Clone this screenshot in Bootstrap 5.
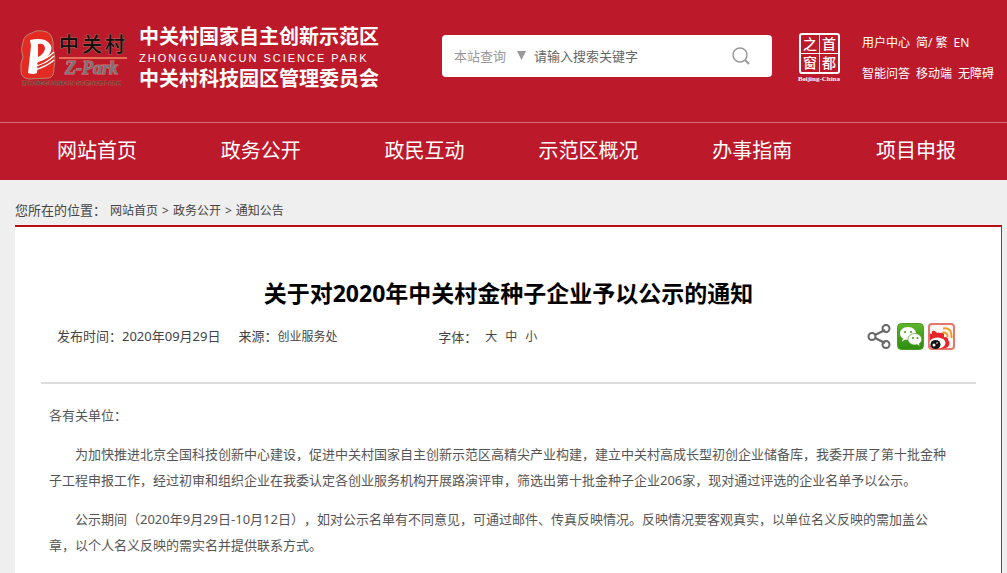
<!DOCTYPE html>
<html lang="zh-CN">
<head>
<meta charset="utf-8">
<meta name="viewport" content="width=device-width, initial-scale=1">
<title>关于对2020年中关村金种子企业予以公示的通知</title>
<link href="https://cdn.jsdelivr.net/npm/bootstrap@5.3.0/dist/css/bootstrap.min.css" rel="stylesheet">
<style>
  body { background: #efefef; color: #444; font-family: "Noto Sans", "Noto Sans CJK SC", sans-serif; font-size: 13px; line-height: 26px; }
  a { color: inherit; text-decoration: none; }
  .site-header { background: #bc1a2b; color: #fff; }
  .masthead { min-height: 122px; padding: 0 11px 11px 20px; }
  .site-logo { width: 108px; height: 64px; margin-top: 6px; }
  .brand, .quick-links { padding-top: 4px; }
  .site-name { margin-left: 11px; font-size: 20px; line-height: 24px; font-weight: 700; white-space: nowrap; }
  .site-name-en { font-family: "Liberation Sans", sans-serif; font-size: 11px; line-height: 18px; font-weight: 400; letter-spacing: 2px; }
  .search-box { flex: 0 1 330px; height: 42px; border-radius: 4px; padding: 0 22px 0 12px; }
  .search-box select { width: 72px; border: 0; color: #999; appearance: none; padding: 0; background: url("data:image/svg+xml,%3Csvg xmlns='http://www.w3.org/2000/svg' viewBox='0 0 9 9'%3E%3Cpath fill='%23999' d='M0 0h9L4.500 9z'/%3E%3C/svg%3E") right center / 9px 9px no-repeat; }
  .search-box input { border: 0; padding: 0; margin-left: 8px; min-width: 0; background: none; outline: 0; }
  .search-box input::placeholder { color: #666; opacity: 1; }
  .seal { width: 48px; height: 52px; margin: 2px 0 0 24px; }
  .quick-links { min-width: 134px; margin-left: 18px; font-size: 12px; line-height: 31px; white-space: nowrap; }
  .quick-links > div { display: flex; gap: 6px; }
  .main-nav { border-top: 1px solid #d5707b; padding: 0 9px 2px 15px; font-size: 20px; line-height: 55px; }
  .crumbs { padding: 17px 15px 1px; }
  .crumbs ol { font-size: 12px; }
  .crumbs li + li::before { content: ">"; padding: 0 4px; }
  .sheet { margin: 0 5px 0 15px; border-top: 2px solid #b80c14; border-right: 1px solid #c81f2b; padding: 49px 25px 14px 26px; }
  .sheet h1 { font-size: 23px; line-height: 34px; font-weight: 700; color: #000; margin: 0 0 13px; }
  .meta-row { padding: 0 21px 32px 16px; border-bottom: 2px solid #ddd; }
  .meta-left { flex: 0 0 42%; gap: 18px; }
  .meta-row .minor { font-size: 12px; }
  .size-btn { border: 0; background: none; padding: 0; color: inherit; font-size: 12px; }
  .share-btn { border: 0; background: none; padding: 0; width: 27px; height: 27px; display: block; }
  .share-btn svg { display: block; }
  .notice { padding: 18px 27px 0 8px; color: #555; text-spacing-trim: space-all; }
  .notice p { margin: 0 0 13px; }
  .notice .indent { text-indent: 2em; }
</style>
</head>
<body class="d-flex flex-column min-vh-100">
<header class="site-header">
  <div class="masthead d-flex align-items-center">
    <a href="#" class="brand d-flex align-items-center" aria-label="中关村国家自主创新示范区">
      <svg class="site-logo flex-shrink-0" viewBox="0 0 108 64">
        <path d="M3 13Q4 6 12 4Q17 0 27 3Q34 6 33 20Q36 28 34 39Q34 48 29 49L9 50Q1 49 1 42Q0 34 3 28Q0 20 3 13Z" fill="#e32b24" stroke="#b98a6a" stroke-width="1"/>
        <path d="M10 11Q18 9 25 11Q33 15 31 22Q28 30 18 33L17 44Q13 46 8 44L11 17Z" fill="#fff"/>
        <path d="M18 15Q25 14 25 20Q23 26 18 28Z" fill="#e32b24"/>
        <path d="M10 34Q25 32 34 23M12 38Q25 36 34 27M14 41Q26 38 34 31" fill="none" stroke="#fff" stroke-width="1.500"/>
        <path d="M17 35Q27 32 34 25M17 38Q27 35 34 29" fill="none" stroke="#e32b24" stroke-width="1"/>
        <g font-family="Noto Sans CJK SC, sans-serif" font-size="20" font-weight="500" fill="#17100f" stroke="#a66b5c" stroke-width="1" paint-order="stroke">
          <text x="39" y="23">中</text><text x="62" y="23">关</text><text x="85" y="23">村</text>
        </g>
        <path d="M39 29H107" stroke="#e56f57" stroke-width="2"/>
        <text x="45" y="45" font-family="Liberation Serif, serif" font-style="italic" font-weight="700" font-size="18" fill="#78737b" stroke="#d58178" stroke-width="1" paint-order="stroke">Z-Park</text>
        <text x="2" y="56" font-family="Liberation Sans, sans-serif" font-size="6" font-weight="700" fill="#64302c" stroke="#c8796a" stroke-width="0.500" paint-order="stroke">ZHONGGUANCUN SCIENCE PARK</text>
      </svg>
      <span class="site-name d-block">
        <span class="d-block">中关村国家自主创新示范区</span>
        <span class="site-name-en d-block">ZHONGGUANCUN SCIENCE PARK</span>
        <span class="d-block">中关村科技园区管理委员会</span>
      </span>
    </a>
    <form class="search-box bg-white d-flex align-items-center ms-auto" role="search">
      <select aria-label="查询范围"><option>本站查询</option></select>
      <input class="flex-grow-1" type="text" aria-label="搜索关键字" placeholder="请输入搜索关键字">
      <button type="button" class="border-0 bg-transparent p-0 d-flex" aria-label="搜索">
        <svg width="18" height="18" viewBox="0 0 18 18" fill="none" stroke="#999" stroke-width="1.500"><circle cx="8" cy="8" r="7"/><path d="M13 13l4 4" stroke-width="2"/></svg>
      </button>
    </form>
    <a href="#" class="d-flex flex-shrink-0" aria-label="首都之窗">
      <svg class="seal" viewBox="0 0 48 52">
        <rect x="4" y="3" width="39" height="39" rx="2" fill="none" stroke="#fff" stroke-width="2"/>
        <path d="M23.500 3V42M4 22.500H43" stroke="#fff" stroke-width="1"/>
        <g font-family="Noto Sans CJK SC, sans-serif" font-weight="500" font-size="14" fill="#fff">
          <text x="7" y="18">之</text><text x="26" y="18">首</text><text x="7" y="37">窗</text><text x="26" y="37">都</text>
        </g>
        <text x="2" y="50" font-family="Liberation Serif, serif" font-weight="700" font-size="7" fill="#fff">Beijing-China</text>
      </svg>
    </a>
    <div class="quick-links">
      <div><a href="#">用户中心</a><a href="#">简/ 繁</a><a href="#">EN</a></div>
      <div><a href="#">智能问答</a><a href="#">移动端</a><a href="#">无障碍</a></div>
    </div>
  </div>
  <nav class="main-nav">
    <div class="row g-0 text-center text-nowrap">
      <a class="col" href="#">网站首页</a>
      <a class="col" href="#">政务公开</a>
      <a class="col" href="#">政民互动</a>
      <a class="col" href="#">示范区概况</a>
      <a class="col" href="#">办事指南</a>
      <a class="col" href="#">项目申报</a>
    </div>
  </nav>
</header>

<nav class="crumbs d-flex align-items-baseline" aria-label="breadcrumb">
  <span>您所在的位置：</span>
  <ol class="list-unstyled d-flex mb-0 ms-1">
    <li><a href="#">网站首页</a></li>
    <li><a href="#">政务公开</a></li>
    <li><a href="#">通知公告</a></li>
  </ol>
</nav>

<main class="sheet bg-white flex-grow-1">
  <h1 class="text-center">关于对2020年中关村金种子企业予以公示的通知</h1>
  <div class="meta-row d-flex align-items-center">
    <div class="meta-left d-flex me-1">
      <span>发布时间：2020年09月29日</span>
      <span>来源：<span class="minor">创业服务处</span></span>
    </div>
    <div class="d-flex align-items-center gap-2">
      <span>字体：</span>
      <button type="button" class="size-btn">大</button>
      <button type="button" class="size-btn">中</button>
      <button type="button" class="size-btn">小</button>
    </div>
    <div class="d-flex gap-1 ms-auto">
      <button type="button" class="share-btn" aria-label="分享">
        <svg width="27" height="27" viewBox="0 0 27 27" fill="none" stroke="#666" stroke-width="2"><path d="M9 12L19 7M9 15L19 20"/><circle cx="6" cy="13.500" r="3.500"/><circle cx="20" cy="5.500" r="3.500"/><circle cx="20" cy="21.500" r="3.500"/></svg>
      </button>
      <button type="button" class="share-btn" aria-label="微信">
        <svg width="27" height="27" viewBox="0 0 27 27">
          <defs><linearGradient id="wx" x2="0" y2="1"><stop stop-color="#5fb52b"/><stop offset="1" stop-color="#2e8c10"/></linearGradient></defs>
          <rect x="0.500" y="0.500" width="26" height="26" rx="4" fill="url(#wx)" stroke="#4a9c25"/>
          <path d="M11 4C6 4 3 7 3 10.500c0 2 1 4 3 5l-1 3 3.500-2 2.500.5c5 0 8-3 8-6.500S16 4 11 4z" fill="#fff"/>
          <path d="M18 10.500c-4 0-7 2.500-7 5.800S14 22 18 22l2-.4 3 1.700-.8-2.600c1.700-1 2.500-2.500 2.500-4.400 0-3.300-3-5.800-6.700-5.800z" fill="#fff" stroke="#48a020" stroke-width="0.700"/>
          <g fill="#3e9d18"><circle cx="8" cy="9" r="1"/><circle cx="14" cy="9" r="1"/><circle cx="16" cy="15" r="1"/><circle cx="20.500" cy="15" r="1"/></g>
        </svg>
      </button>
      <button type="button" class="share-btn" aria-label="微博">
        <svg width="27" height="27" viewBox="0 0 27 27">
          <rect x="1" y="1" width="25" height="25" rx="3" fill="#fff7f3" stroke="#e2776b" stroke-width="2"/>
          <path d="M2 14Q1 9 4 11Q3 7 7 8L9 10Q10 9 12 10Q17 9 16 14Q21 14 20 17Q23 20 20 24Q16 26 8 26L2 24Z" fill="#e5262b"/>
          <ellipse cx="9.500" cy="20" rx="8" ry="5.500" fill="#fff"/>
          <ellipse cx="7.500" cy="21.500" rx="5" ry="4.500" fill="#111"/><circle cx="6" cy="22" r="1.500" fill="#fff"/><circle cx="9" cy="20" r="0.800" fill="#fff"/>
          <path d="M15 5.500Q24 4 23.500 15M14.500 9.500Q20 9 19.500 14" fill="none" stroke="#f29b24" stroke-width="2"/>
        </svg>
      </button>
    </div>
  </div>
  <article class="notice">
    <p>各有关单位：</p>
    <p class="indent">为加快推进北京全国科技创新中心建设，促进中关村国家自主创新示范区高精尖产业构建，建立中关村高成长型初创企业储备库，我委开展了第十批金种子工程申报工作，经过初审和组织企业在我委认定各创业服务机构开展路演评审，筛选出第十批金种子企业206家，现对通过评选的企业名单予以公示。</p>
    <p class="indent">公示期间（2020年9月29日-10月12日），如对公示名单有不同意见，可通过邮件、传真反映情况。反映情况要客观真实，以单位名义反映的需加盖公章，以个人名义反映的需实名并提供联系方式。</p>
  </article>
</main>
<script src="https://cdn.jsdelivr.net/npm/bootstrap@5.3.0/dist/js/bootstrap.bundle.min.js"></script>
</body>
</html>
